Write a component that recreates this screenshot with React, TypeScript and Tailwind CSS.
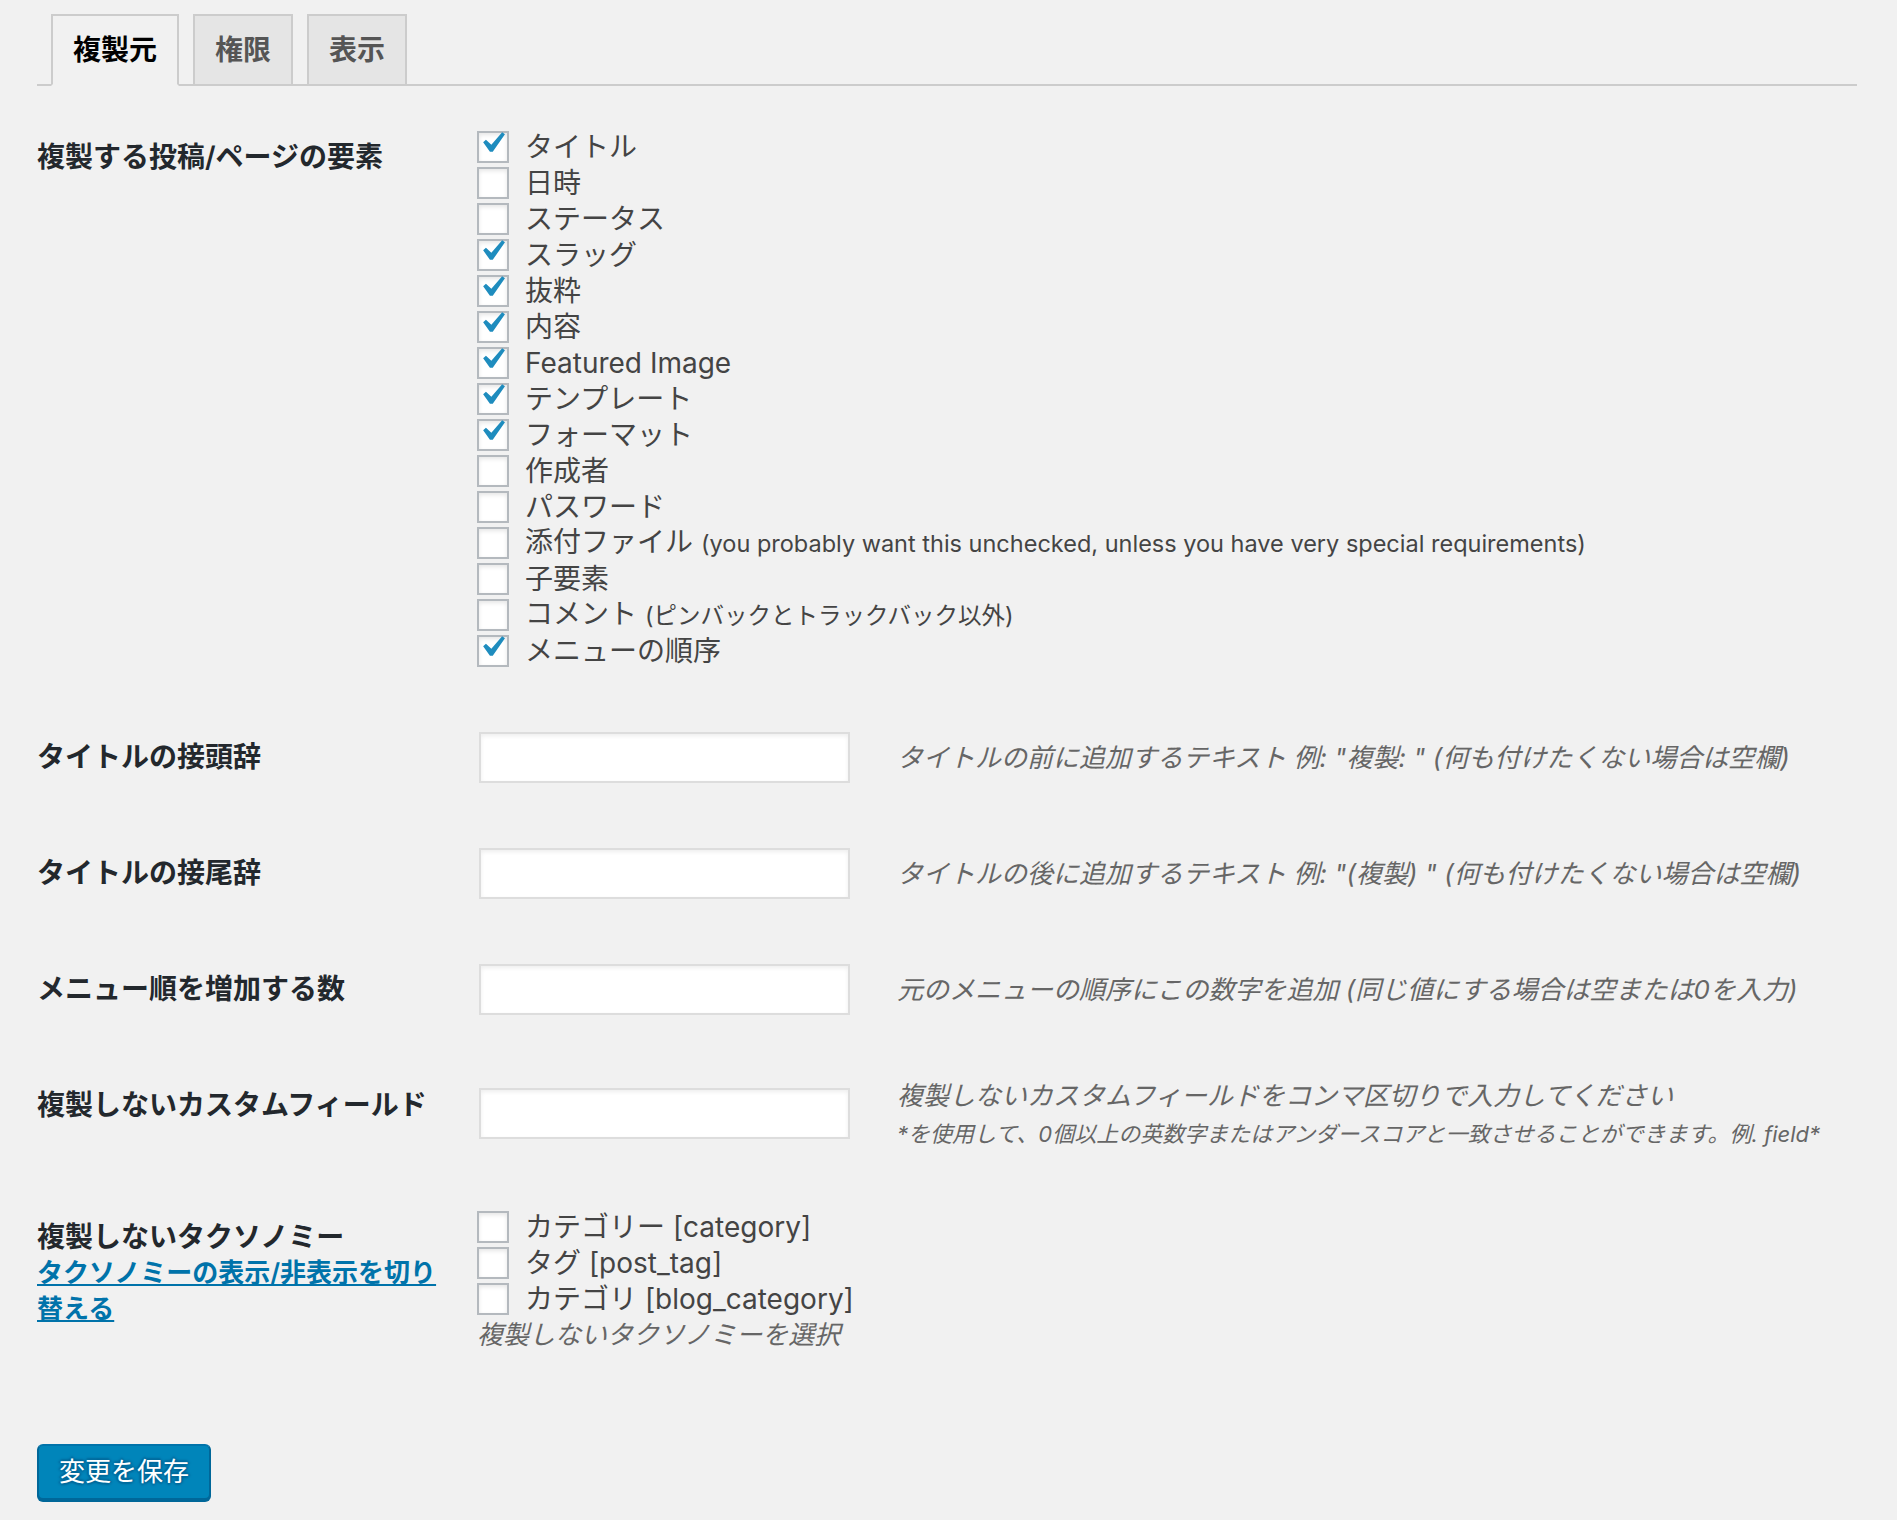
const items = [
  { label: "タイトル", checked: true },
  { label: "日時", checked: false },
  { label: "ステータス", checked: false },
  { label: "スラッグ", checked: true },
  { label: "抜粋", checked: true },
  { label: "内容", checked: true },
  { label: "Featured Image", checked: true },
  { label: "テンプレート", checked: true },
  { label: "フォーマット", checked: true },
  { label: "作成者", checked: false },
  { label: "パスワード", checked: false },
  {
    label: "添付ファイル",
    checked: false,
    note: "(you probably want this unchecked, unless you have very special requirements)",
  },
  { label: "子要素", checked: false },
  { label: "コメント", checked: false, note: "(ピンバックとトラックバック以外)" },
  { label: "メニューの順序", checked: true },
]

const taxonomies = ["カテゴリー [category]", "タグ [post_tag]", "カテゴリ [blog_category]"]

const textRows = [
  {
    label: "タイトルの接頭辞",
    desc: 'タイトルの前に追加するテキスト 例: "複製: " (何も付けたくない場合は空欄)',
  },
  {
    label: "タイトルの接尾辞",
    desc: 'タイトルの後に追加するテキスト 例: "(複製) " (何も付けたくない場合は空欄)',
  },
  {
    label: "メニュー順を増加する数",
    desc: "元のメニューの順序にこの数字を追加 (同じ値にする場合は空または0を入力)",
  },
]

function Checkbox({ checked }: { checked: boolean }) {
  return (
    <span className="relative inline-block w-[32px] h-[32px] shrink-0 border-2 border-[#b4b9be] bg-white shadow-[inset_0_2px_4px_rgba(0,0,0,0.1)]">
      {checked && (
        <svg
          viewBox="0 0 20 20"
          className="absolute left-[-8px] top-[-11px] w-[42px] h-[42px]"
          fill="#1e8cbe"
        >
          <path d="M14.83 4.89l1.34.94-5.81 8.38H9.02L5.78 9.67l1.34-1.25 2.57 2.4z" />
        </svg>
      )}
    </span>
  )
}

function TextInput() {
  return (
    <input
      type="text"
      className="ml-[2px] w-[371px] h-[51px] shrink-0 bg-white border-2 border-[#ddd] shadow-[inset_0_2px_4px_rgba(0,0,0,0.07)] outline-none"
    />
  )
}

const labelCls =
  "w-[420px] shrink-0 pr-[20px] text-[28px] leading-[36px] font-semibold text-[#23282d]"
const descCls = "italic text-[26px] leading-[36px] text-[#666]"

export default function App() {
  return (
    <main className="min-h-screen bg-[#f1f1f1] pl-[37px] pr-[40px] font-[Inter,'Noto_Sans_CJK_JP',sans-serif] text-[#444]">

      {/* TABS */}
      <div className="flex pt-[14px] border-b-2 border-[#ccc]">
        <span className="ml-[14px] -mb-[2px] border-2 border-[#ccc] border-b-[#f1f1f1] bg-[#f1f1f1] px-[20px] py-[10px] text-[28px] leading-[48px] font-semibold text-black">
          複製元
        </span>
        <span className="ml-[14px] border-2 border-b-0 border-[#ccc] bg-[#e5e5e5] px-[20px] py-[10px] text-[28px] leading-[48px] font-semibold text-[#555]">
          権限
        </span>
        <span className="ml-[14px] border-2 border-b-0 border-[#ccc] bg-[#e5e5e5] px-[20px] py-[10px] text-[28px] leading-[48px] font-semibold text-[#555]">
          表示
        </span>
      </div>

      {/* ELEMENTS */}
      <div className="flex">
        <div className={`${labelCls} pt-[53px]`}>複製する投稿/ページの要素</div>
        <div className="pl-[20px] pt-[43px] pb-[31px]">
          {items.map((item) => (
            <label key={item.label} className="flex items-center h-[36px]">
              <Checkbox checked={item.checked} />
              <span className="ml-[16px] text-[28px] leading-[36px] whitespace-nowrap">
                {item.label}
                {item.note && (
                  <span className="ml-[8px] text-[23.5px]">{item.note}</span>
                )}
              </span>
            </label>
          ))}
        </div>
      </div>

      {/* TEXT ROWS */}
      {textRows.map((row) => (
        <div key={row.label} className="flex">
          <div className={`${labelCls} pt-[39px]`}>{row.label}</div>
          <div className="pl-[20px] pt-[32px] pb-[33px] flex items-center">
            <TextInput />
            <span className={`ml-[47px] whitespace-nowrap ${descCls}`}>{row.desc}</span>
          </div>
        </div>
      ))}

      {/* CUSTOM FIELDS */}
      <div className="flex">
        <div className={`${labelCls} pt-[39px]`}>複製しないカスタムフィールド</div>
        <div className="pl-[20px] pt-[32px] pb-[23px] flex items-start">
          <div className="mt-[8px]">
            <TextInput />
          </div>
          <div className="ml-[47px] -mt-[2px] whitespace-nowrap">
            <p className={descCls}>複製しないカスタムフィールドをコンマ区切りで入力してください</p>
            <p className="italic text-[22px] leading-[40px] text-[#666]">
              *を使用して、0個以上の英数字またはアンダースコアと一致させることができます。例. field*
            </p>
          </div>
        </div>
      </div>

      {/* TAXONOMIES */}
      <div className="flex">
        <div className={`${labelCls} pt-[42px]`}>
          <div>複製しないタクソノミー</div>
          <a href="#" className="block text-[26px] leading-[36px] text-[#0073aa] underline">
            タクソノミーの表示/非表示を切り
            <br />
            替える
          </a>
        </div>
        <div className="pl-[20px] pt-[32px]">
          {taxonomies.map((t) => (
            <label key={t} className="flex items-center h-[36px]">
              <Checkbox checked={false} />
              <span className="ml-[16px] text-[28px] leading-[36px] whitespace-nowrap">{t}</span>
            </label>
          ))}
          <p className={descCls}>複製しないタクソノミーを選択</p>
        </div>
      </div>

      {/* SAVE */}
      <div className="mt-[91px]">
        <button className="h-[56px] px-[20px] rounded-[6px] border-2 border-[#006799] border-t-[#0073aa] bg-[#0085ba] text-white text-[26px] leading-[50px] shadow-[0_2px_0_#006799] [text-shadow:0_-2px_2px_#006799,2px_0_2px_#006799,0_2px_2px_#006799,-2px_0_2px_#006799]">
          変更を保存
        </button>
      </div>

    </main>
  )
}
